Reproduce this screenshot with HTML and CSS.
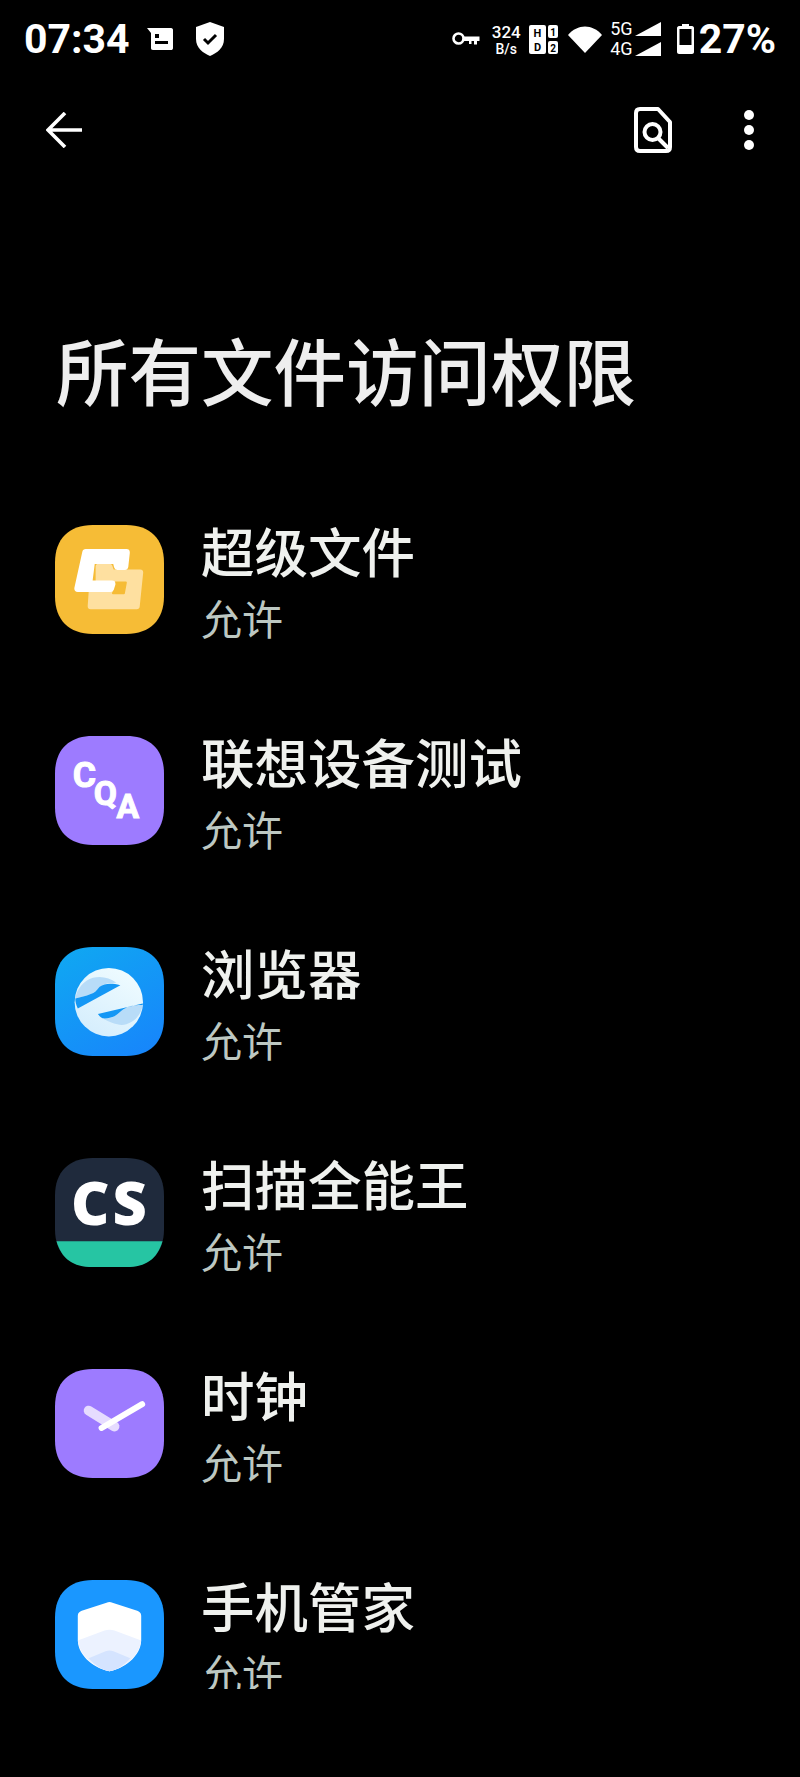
FILE: index.html
```html
<!DOCTYPE html>
<html lang="zh-CN">
<head>
    <meta charset="UTF-8">
    <meta name="viewport" content="width=device-width, initial-scale=1.0">
    <title>所有文件访问权限</title>
    <link rel="stylesheet" href="styles.css">
</head>
<body>

<div class="status-bar">
    <div class="status-left">
        <span class="time">07:34</span>
        <svg class="msg-icon" viewBox="0 0 28 24"><path d="M1 1H25C26.500 1 27 2 27 3V21C27 22.500 26 23 25 23H7C5.500 23 5 22 5 21V6Z" fill="#fff"/><rect x="9" y="7" width="4" height="4" fill="#000"/><rect x="9" y="14" width="13" height="3" fill="#000"/></svg>
        <svg class="shield-icon" viewBox="0 0 30 34"><path d="M15 0L29 5V17C29 26 22 31 15 34C8 31 1 26 1 17V5Z" fill="#fff"/><path d="M9 17L13 21L21 13" fill="none" stroke="#000" stroke-width="3"/></svg>
    </div>
    <div class="status-right">
        <svg class="key-icon" viewBox="0 0 28 16"><circle cx="6.500" cy="7.500" r="5" fill="none" stroke="#fff" stroke-width="2.600"/><path d="M11 5.500H27.500V10H25V13.500H22V10H19.500V13H17V10H11Z" fill="#fff"/></svg>
        <div class="speed"><span class="speed-num">324</span><span class="speed-unit">B/s</span></div>
        <svg class="hd-icon" viewBox="0 0 29 29">
            <rect x="0" y="0" width="17" height="29" rx="2" fill="#fff"/>
            <rect x="19" y="0" width="10" height="13" rx="2" fill="#fff"/>
            <rect x="19" y="16" width="10" height="13" rx="2" fill="#fff"/>
            <text x="8.500" y="11.500" class="hd-big">H</text>
            <text x="8.500" y="26" class="hd-big">D</text>
            <text x="24" y="10.500" class="hd-small">1</text>
            <text x="24" y="26.500" class="hd-small">2</text>
        </svg>
        <svg class="wifi-icon" viewBox="0 0 34 27"><path d="M17 27L0 9C9.500 -2.500 24.500 -2.500 34 9Z" fill="#fff"/></svg>
        <div class="net">
            <div class="net-row"><span>5G</span><svg class="signal" viewBox="0 0 26 14"><path d="M0 14L26 0V14Z" fill="#fff"/></svg></div>
            <div class="net-row"><span>4G</span><svg class="signal" viewBox="0 0 26 14"><path d="M0 14L26 0V14Z" fill="#fff"/></svg></div>
        </div>
        <svg class="battery-icon" viewBox="0 0 17 30"><path d="M5 0H12V2H15C16.200 2 17 3 17 4V28C17 29.200 16 30 15 30H2C1 30 0 29.200 0 28V4C0 3 1 2 2 2H5Z" fill="#fff"/><rect x="2.500" y="5" width="12" height="16" fill="#000"/></svg>
        <span class="battery-text">27%</span>
    </div>
</div>

<div class="toolbar">
    <svg class="back-icon" viewBox="0 0 36 36"><path d="M36 18H2M19 1L2 18L19 35" fill="none" stroke="#fff" stroke-width="3.600"/></svg>
    <div class="toolbar-right">
        <svg class="doc-icon" viewBox="0 0 38 46"><path d="M6 2H24L36 15V40C36 42.500 34.500 44 32 44H6C3.500 44 2 42.500 2 40V6C2 3.500 3.500 2 6 2Z" fill="none" stroke="#fff" stroke-width="4" stroke-linejoin="round"/><circle cx="18.500" cy="25" r="8" fill="none" stroke="#fff" stroke-width="4"/><path d="M24 31L34 41" stroke="#fff" stroke-width="4"/></svg>
        <div class="more-icon"><i></i><i></i><i></i></div>
    </div>
</div>

<h1 class="page-title">所有文件访问权限</h1>

<div class="app-list">
    <div class="app-row">
        <svg class="app-icon" viewBox="0 0 110 110">
            <path fill="#f6bc36" d="M38 0H72C96 0 110 14 110 38V72C110 96 96 110 72 110H38C14 110 0 96 0 72V38C0 14 14 0 38 0Z"/>
            <path fill="#fee0a0" stroke="#fee0a0" stroke-width="6" stroke-linejoin="round" d="M44 42H55L57 48H86L82.500 82H36L37.500 60H44Z"/>
            <path fill="#f6bc36" stroke="#f6bc36" stroke-width="2" stroke-linejoin="round" d="M61 58H71.500L69.500 69H58.500Z"/>
            <path fill="#fff" stroke="#fff" stroke-width="7" stroke-linejoin="round" d="M31 27.800H72L70.500 41.800H63L61.500 35.800H37L34 59.500H57.500L56 64.200H23Z"/>
        </svg>
        <div class="app-text"><div class="app-name">超级文件</div><div class="app-sub">允许</div></div>
    </div>
    <div class="app-row">
        <svg class="app-icon" viewBox="0 0 110 110">
            <path fill="#9d7bff" d="M38 0H72C96 0 110 14 110 38V72C110 96 96 110 72 110H38C14 110 0 96 0 72V38C0 14 14 0 38 0Z"/>
            <text class="coa" x="18" y="51" font-size="36">C</text>
            <text class="coa" x="39" y="70" font-size="34">Q</text>
            <text class="coa" x="62" y="83" font-size="34">A</text>
        </svg>
        <div class="app-text"><div class="app-name">联想设备测试</div><div class="app-sub">允许</div></div>
    </div>
    <div class="app-row">
        <svg class="app-icon" viewBox="0 0 110 110">
            <defs>
                <linearGradient id="browserBg" x1="0.200" y1="0" x2="0.800" y2="1"><stop offset="0" stop-color="#10a6f2"/><stop offset="1" stop-color="#1786fb"/></linearGradient>
                <linearGradient id="browserE" x1="0.800" y1="0" x2="0.200" y2="1"><stop offset="0" stop-color="#f0fcff"/><stop offset="1" stop-color="#d4edfd"/></linearGradient>
            </defs>
            <path fill="url(#browserBg)" d="M38 0H72C96 0 110 14 110 38V72C110 96 96 110 72 110H38C14 110 0 96 0 72V38C0 14 14 0 38 0Z"/>
            <circle cx="54.300" cy="55.700" r="34.500" fill="url(#browserE)"/>
            <path fill="#b8dcf8" d="M20.500 52C22 42 29 34 38.300 31C47 29 55 31 62 36C55 36 50 37 45 40C42 44 40 46 36 47.500C31 49.500 26 51 20.500 52Z"/>
            <path fill="#1497f5" d="M20.500 52C26 51 31 49.500 36 47.500C40 46 42 44 45 40C50 37 56 36 66 38.500L23 62C21 58 20.500 55 20.500 52Z"/>
            <path fill="#b8dcf8" d="M88.500 58.500C87 68 81 75 72 78C65 80 57 77 48 72C54 72.500 60 71 65 66C68 63.500 70 62 73.300 60.500C78 59 83 58.500 88.500 58.500Z"/>
            <path fill="#1497f5" d="M43.300 67.700L88.500 57V58.500C83 58.500 78 59 73.300 60.500C70 62 68 63.500 65 66C60 71 54 72.500 48 72C46 71 44.500 69.500 43.300 67.700Z"/>
        </svg>
        <div class="app-text"><div class="app-name">浏览器</div><div class="app-sub">允许</div></div>
    </div>
    <div class="app-row">
        <svg class="app-icon" viewBox="0 0 110 110">
            <path fill="#1f2a3c" d="M38 0H72C96 0 110 14 110 38V72C110 96 96 110 72 110H38C14 110 0 96 0 72V38C0 14 14 0 38 0Z"/>
            <path fill="#26c5a3" d="M1.500 84H108.500C103 102 92 110 72 110H38C18 110 7 102 1.500 84Z"/>
            <text class="cs" x="56" y="68">CS</text>
        </svg>
        <div class="app-text"><div class="app-name">扫描全能王</div><div class="app-sub">允许</div></div>
    </div>
    <div class="app-row">
        <svg class="app-icon" viewBox="0 0 110 110">
            <path fill="#9d7bff" d="M38 0H72C96 0 110 14 110 38V72C110 96 96 110 72 110H38C14 110 0 96 0 72V38C0 14 14 0 38 0Z"/>
            <path d="M34 42L60 58" stroke="#e6dcff" stroke-width="10" stroke-linecap="round"/>
            <path d="M47 59.500L88 35.500" stroke="#fff" stroke-width="6" stroke-linecap="round"/>
        </svg>
        <div class="app-text"><div class="app-name">时钟</div><div class="app-sub">允许</div></div>
    </div>
    <div class="app-row">
        <svg class="app-icon" viewBox="0 0 110 110">
            <path fill="#1a97ff" d="M38 0H72C96 0 110 14 110 38V72C110 96 96 110 72 110H38C14 110 0 96 0 72V38C0 14 14 0 38 0Z"/>
            <path fill="#fff" d="M52 23C54 22 56 22 58 23L83 31C85 32 87 33 87 36V60C87 78 68 90 55 92C42 90 23 78 23 60V36C23 33 25 32 27 31Z"/>
            <path fill="#ecf2ff" d="M23 61L50 51C53 50 57 50 60 51L87 61C85 78 67 90 55 92C43 90 25 78 23 61Z"/>
            <path fill="#d5e4ff" d="M34 79L51 72C54 71 56 71 59 72L76 79C70 86 62 91 55 92C48 91 40 86 34 79Z"/>
        </svg>
        <div class="app-text"><div class="app-name">手机管家</div><div class="app-sub">允许</div></div>
    </div>
</div>

</body>
</html>
```

FILE: styles.css
```css
body {
    margin: 0;
    background: #000000;
    color: #ffffff;
    font-family: "Noto Sans CJK SC", "Noto Sans", sans-serif;
}
svg {
    display: block;
    flex: none;
}
.status-bar {
    height: 78px;
    display: flex;
    justify-content: space-between;
    align-items: center;
    padding: 0 24px;
    font-family: Roboto, sans-serif;
}
.status-left {
    display: flex;
    align-items: center;
}
.time {
    font-size: 41px;
    font-weight: 700;
    line-height: 78px;
    width: 122px;
}
.msg-icon {
    width: 28px;
    height: 24px;
    margin-right: 21px;
}
.shield-icon {
    width: 30px;
    height: 34px;
}
.status-right {
    display: flex;
    align-items: center;
}
.key-icon {
    width: 28px;
    height: 16px;
    margin-right: 10px;
}
.speed {
    display: flex;
    flex-direction: column;
    align-items: center;
    width: 32px;
    font-weight: 500;
    margin-right: 7px;
}
.speed-num {
    font-size: 17px;
    line-height: 19px;
}
.speed-unit {
    font-size: 14px;
    line-height: 14px;
}
.hd-icon {
    width: 29px;
    height: 29px;
    margin-right: 10px;
}
.hd-big, .hd-small {
    font-family: Roboto, sans-serif;
    font-weight: 700;
    text-anchor: middle;
    fill: #000000;
}
.hd-big {
    font-size: 11px;
}
.hd-small {
    font-size: 10px;
}
.wifi-icon {
    width: 34px;
    height: 27px;
    margin-right: 8px;
}
.net {
    display: flex;
    flex-direction: column;
    gap: 6px;
    margin-right: 16px;
}
.net-row {
    display: flex;
    align-items: center;
    gap: 2px;
    font-size: 18px;
    line-height: 14px;
}
.signal {
    width: 26px;
    height: 14px;
}
.battery-icon {
    width: 17px;
    height: 30px;
    margin-right: 5px;
}
.battery-text {
    font-size: 41px;
    font-weight: 700;
    line-height: 78px;
}
.toolbar {
    height: 104px;
    display: flex;
    justify-content: space-between;
    align-items: center;
    padding: 0 43px 0 46px;
}
.back-icon {
    width: 36px;
    height: 36px;
}
.toolbar-right {
    display: flex;
    align-items: center;
    gap: 69px;
}
.doc-icon {
    width: 38px;
    height: 46px;
}
.more-icon {
    display: flex;
    flex-direction: column;
    gap: 5px;
    width: 16px;
    align-items: center;
}
.more-icon i {
    display: block;
    width: 10px;
    height: 10px;
    border-radius: 50%;
    background: #ffffff;
}
.page-title {
    margin: 137px 0 0;
    padding-left: 56px;
    font-size: 72.5px;
    font-weight: 500;
    line-height: 100px;
    color: #eeeeee;
}
.app-list {
    display: flex;
    flex-direction: column;
    gap: 101px;
    padding: 105px 0 0 55px;
}
.app-row {
    display: flex;
    align-items: center;
    gap: 37px;
    height: 110px;
}
.app-icon {
    width: 109px;
    height: 109px;
}
.app-text {
    margin-top: 10px;
}
.app-name {
    font-size: 53.5px;
    font-weight: 500;
    line-height: 66px;
    color: #eff1ee;
}
.app-sub {
    font-size: 41px;
    line-height: 68px;
    color: #bdc8c2;
}
.coa {
    font-family: Roboto, sans-serif;
    font-weight: 700;
    fill: #ffffff;
    stroke: #ffffff;
    stroke-width: 1;
}
.cs {
    font-family: "Open Sans", sans-serif;
    font-size: 60px;
    font-weight: 800;
    letter-spacing: 3px;
    text-anchor: middle;
    fill: #ffffff;
}
```
